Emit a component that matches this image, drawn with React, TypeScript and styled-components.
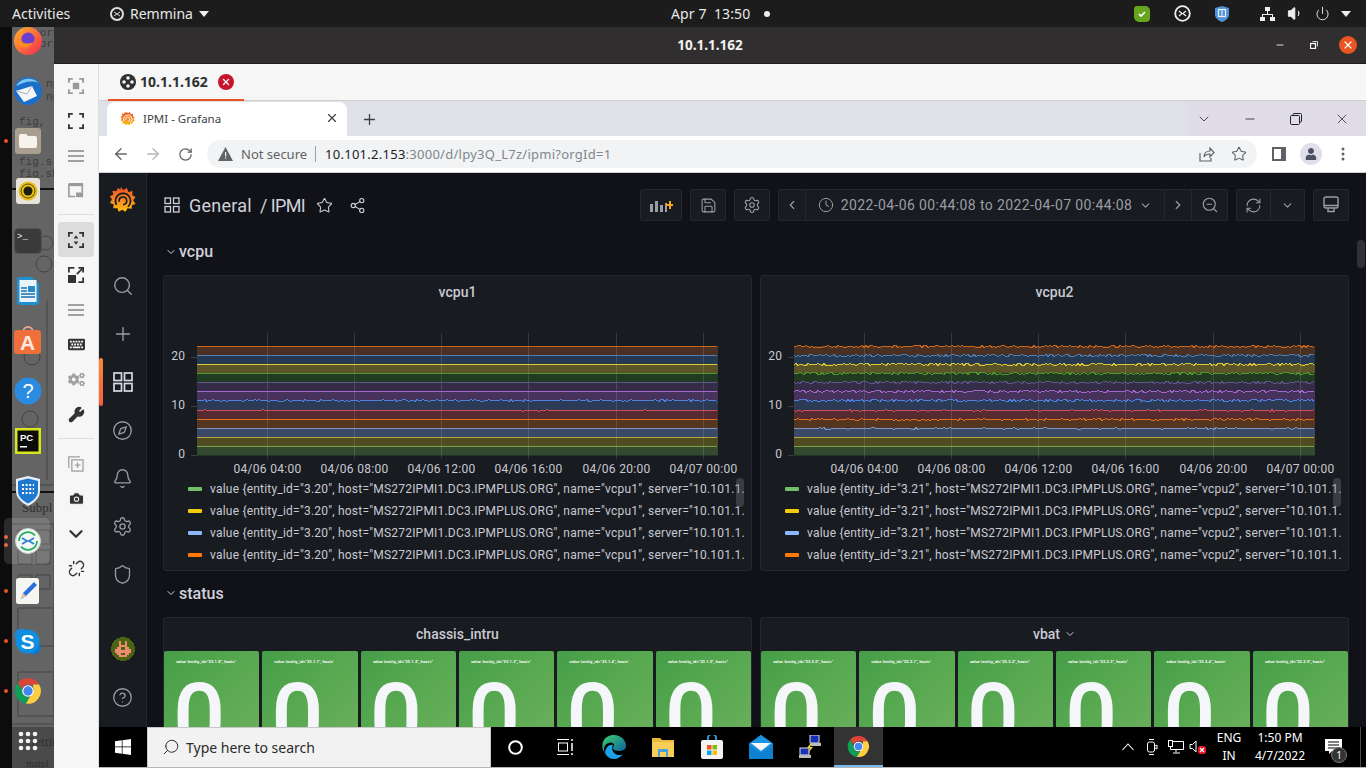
import React from 'react';
import styled, { createGlobalStyle } from 'styled-components';
import { Search, Plus, Compass, Bell, Settings, Shield, CircleHelp, Star, Share2, Save, Clock, ChevronDown, ChevronLeft, ChevronRight, ZoomOut, RefreshCw, X, ArrowLeft, ArrowRight, RotateCw, Minus, Wrench, Camera, Unlink, Volume1, Power } from 'lucide-react';
import { FaCogs, FaKeyboard, FaUser } from 'react-icons/fa';

const GlobalStyle = createGlobalStyle`
  html, body { margin: 0; padding: 0; width: 1366px; height: 768px; overflow: hidden; background: #000; }
  * { box-sizing: border-box; }
`;

const Screen = styled.div`
  width: 1366px; height: 768px; display: flex; flex-direction: column; overflow: hidden;
  font-family: "Noto Sans", sans-serif;
`;
const TopBar = styled.header`
  height: 27px; flex: none; background: #1c1c1c; color: #e8e8e8; display: flex; align-items: center; font-size: 14px; position: relative;
`;
const Activities = styled.span` margin-left: 12px; width: 98px; `;
const AppMenu = styled.span` display: flex; align-items: center; gap: 6px; width: 100px; svg { flex: none; } `;
const Clocks = styled.span` position: absolute; left: 671px; top: 4px; display: flex; align-items: center; gap: 14px; letter-spacing: .1px; `;
const ClockDot = styled.i` width: 6px; height: 6px; border-radius: 50%; background: #eee; `;
const TrayTop = styled.div` margin-left: auto; display: flex; align-items: center; height: 27px; padding-right: 9.5px; `;
const TraySlot = styled.span<{ $w: number }>` width: ${p => p.$w}px; display: flex; justify-content: center; align-items: center; color: #e8e8e8; `;
const Main = styled.div` flex: 1; min-height: 0; display: flex; `;

const Dock = styled.aside`
  width: 54px; flex: none; position: relative; overflow: hidden;
  background: linear-gradient(90deg, #0c0c0c 0 12px, #646464 12px 100%);
`;
const DockBackdrop = styled.svg` position: absolute; left: 0; top: 0; `;
const DockList = styled.div` position: relative; margin-top: -11px; display: flex; flex-direction: column; `;
const DockSlot = styled.div<{ $active?: boolean }>`
  height: 50px; display: flex; justify-content: center; align-items: center; padding-left: 1px; position: relative;
  &::after {
    content: ''; display: ${p => (p.$active ? 'block' : 'none')}; position: absolute; left: 4px; top: 2px; width: 46px; height: 46px;
    border-radius: 5px; background: rgba(255,255,255,.13);
  }
  svg { position: relative; z-index: 1; }
`;
const RunDot = styled.i<{ $top?: number }>`
  position: absolute; left: 4px; top: ${p => p.$top ?? 23}px; width: 4px; height: 4px; border-radius: 50%; background: #e95420;
`;

const Window = styled.section` flex: 1; min-width: 0; display: flex; flex-direction: column; `;
const TitleBar = styled.div`
  height: 37px; flex: none; background: #302e2e; color: #f2f2f2; font-size: 13.500px; font-weight: 700; position: relative;
  display: flex; align-items: center; justify-content: center; border-bottom: 1px solid #1e1e1e;
`;
const TitleButtons = styled.div` position: absolute; right: 9px; top: 9px; display: flex; align-items: center; gap: 16px; `;
const TitleBtn = styled.span<{ $close?: boolean }>`
  width: 18px; height: 18px; display: flex; align-items: center; justify-content: center; border-radius: 50%; color: #fff;
  background: ${p => (p.$close ? '#e95420' : 'transparent')};
`;
const WinBody = styled.div` flex: 1; min-height: 0; display: flex; `;
const RemTools = styled.nav`
  width: 45px; flex: none; background: #f6f6f6; display: flex; flex-direction: column; align-items: center; padding-top: 4px; border-right: 1px solid #dedede;
`;
const RemTool = styled.div<{ $active?: boolean; $tone?: string }>`
  width: 36px; height: 35px; display: flex; align-items: center; justify-content: center; border-radius: 4px; color: ${p => p.$tone ?? '#3b3b3b'};
  background: ${p => (p.$active ? '#dcdcdc' : 'transparent')};
`;
const RemDivider = styled.hr` width: 36px; border: 0; border-top: 1px solid #dcdcdc; margin: 6px 0 7px; `;
const RemContent = styled.div` flex: 1; min-width: 0; display: flex; flex-direction: column; `;
const RemTabs = styled.div` height: 37px; flex: none; background: #f6f6f6; border-bottom: 1px solid #cfcfcf; padding-left: 9px; `;
const RemTab = styled.div`
  width: 136px; height: 37px; border-bottom: 2px solid #e95420; display: flex; align-items: center; gap: 4px; padding: 0 0 0 12px;
  color: #303030; font-size: 14px; font-weight: 700;
`;
const RemClose = styled.span` width: 16px; height: 16px; margin-left: 6px; border-radius: 50%; background: #c7162b; color: #fff; display: flex; align-items: center; justify-content: center; `;

const TabStrip = styled.div`
  height: 35px; flex: none; background: #dee1e6; display: flex; align-items: flex-end; padding-left: 8px; color: #3c4043;
`;
const ChromeTab = styled.div`
  width: 240px; height: 34px; background: #fff; border-radius: 8px 8px 0 0; display: flex; align-items: center; padding: 0 8px 2px 13px; gap: 8px; font-size: 11.500px; color: #3c4043;
`;
const TabLabel = styled.span` flex: 1; `;
const NewTab = styled.span` width: 44px; height: 34px; display: flex; align-items: center; justify-content: center; `;
const WinControls = styled.div` margin-left: auto; width: 179px; height: 35px; background: #e0dce8; display: flex; align-items: center; justify-content: flex-end; padding-right: 1px; color: #202124; `;
const WinCtl = styled.span` width: 46px; flex: none; display: flex; justify-content: center; align-items: center; `;
const ChromeBar = styled.div`
  height: 37px; flex: none; background: #fff; border-bottom: 1px solid #cfd1d4; display: flex; align-items: center; color: #5f6368; padding-left: 6px;
`;
const NavBtn = styled.span<{ $dim?: boolean }>` width: 32px; display: flex; justify-content: center; color: ${p => (p.$dim ? '#b4b7bb' : '#5f6368')}; `;
const Omnibox = styled.div`
  margin-left: 6px; width: 1050px; height: 28px; border-radius: 14px; background: #f1f3f4; display: flex; align-items: center; padding: 0 10px 0 11px; font-size: 13px; color: #5f6368;
`;
const NotSecure = styled.span` margin-left: 8px; padding-right: 8px; border-right: 1px solid #9aa0a6; line-height: 16px; `;
const Url = styled.span` margin-left: 9px; flex: 1; color: #80868b; letter-spacing: .26px; b { font-weight: 400; color: #202124; } `;
const OmniIcons = styled.span` display: flex; align-items: center; gap: 16px; `;
const ChromeRight = styled.div` display: flex; align-items: center; margin-left: 6px; color: #5f6368; `;
const ChromeIcon = styled.span` width: 32px; display: flex; justify-content: center; align-items: center; `;
const Avatar = styled.span` width: 22px; height: 22px; border-radius: 50%; background: #e1deea; color: #4a5068; display: flex; align-items: center; justify-content: center; overflow: hidden; `;

const Grafana = styled.div` flex: 1; min-height: 0; display: flex; background: #111217; overflow: hidden; font-family: Roboto, sans-serif; color: #ccccdc; position: relative; `;
const SideMenu = styled.div` width: 48px; flex: none; background: #181b1f; border-right: 1px solid #24272d; display: flex; flex-direction: column; align-items: center; position: relative; color: #9a9da6; `;
const SideItem = styled.div<{ $active?: boolean; $h?: number }>`
  width: 100%; height: ${p => p.$h ?? 48}px; display: flex; align-items: center; justify-content: center; position: relative;
  color: ${p => (p.$active ? '#d8d9e6' : 'inherit')};
  &::before {
    content: ''; display: ${p => (p.$active ? 'block' : 'none')}; position: absolute; left: 0; top: 0; width: 4px; height: 100%; border-radius: 2px;
    background: linear-gradient(180deg, #ff8833, #f55f3e);
  }
`;
const SideLogo = styled.div` height: 89px; width: 100%; display: flex; justify-content: center; padding-top: 13px; `;
const SideSpacer = styled.div` height: 27px; flex: none; `;
const Board = styled.main` flex: 1; min-width: 0; padding: 0 17px 0 16px; display: flex; flex-direction: column; position: relative; `;
const DashNav = styled.div` height: 64px; flex: none; display: flex; align-items: center; `;
const Crumb = styled.div` display: flex; align-items: center; font-size: 18px; color: #d0d1dc; margin-left: 1px; svg { flex: none; } `;
const CrumbText = styled.span` margin-left: 9px; letter-spacing: .25px; white-space: pre; `;
const CrumbLeaf = styled.span` margin-left: 8px; letter-spacing: -.6px; white-space: pre; `;
const CrumbIcon = styled.span` display: flex; color: #d0d1dc; margin-left: 11px; & + & { margin-left: 16px; } `;
const NavTools = styled.div` margin-left: auto; display: flex; align-items: center; gap: 8px; `;
const ToolGroup = styled.div` display: flex; height: 32px; background: #181b1f; border: 1px solid #24272d; border-radius: 2px; color: #9a9da6; font-size: 14px; align-items: stretch; `;
const ToolCell = styled.span<{ $w: number; $split?: boolean }>`
  width: ${p => p.$w}px; display: flex; align-items: center; justify-content: center; gap: 7px; white-space: nowrap; letter-spacing: .38px;
  border-right: ${p => (p.$split ? '1px solid #24272d' : '0')};
`;
const Scrollbar = styled.div` position: absolute; right: 1px; top: 67px; width: 8px; height: 28px; border-radius: 4px; background: #2e3138; `;

const RowTitle = styled.div<{ $h: number; $pb?: number }>` height: ${p => p.$h}px; flex: none; display: flex; align-items: center; gap: 2px; padding: 0 0 ${p => p.$pb ?? 0}px 2px; font-size: 16px; font-weight: 500; color: #d0d1dc; `;
const PanelGrid = styled.div` display: grid; grid-template-columns: 589px 589px; gap: 8px; flex: none; `;
const Panel = styled.article<{ $h: number }>` height: ${p => p.$h}px; background: #181b1f; border: 1px solid #24272d; border-radius: 3px; overflow: hidden; display: flex; flex-direction: column; `;
const PanelTitle = styled.div` height: 33px; flex: none; display: flex; align-items: center; justify-content: center; gap: 4px; padding-bottom: 1px; font-size: 14px; font-weight: 500; color: #c8c9d4; `;
const Chart = styled.svg` display: block; flex: none; font-family: Roboto, sans-serif; `;
const Legend = styled.div` position: relative; height: 93px; padding: 1px 6px 0 24px; overflow: hidden; `;
const LegendRow = styled.div` height: 22px; display: flex; align-items: center; gap: 8px; font-size: 12px; color: #c8c9d4; white-space: nowrap; overflow: hidden; letter-spacing: .21px; `;
const Swatch = styled.i<{ $c: string }>` flex: none; width: 14px; height: 4px; border-radius: 1px; background: ${p => p.$c}; `;
const LegendThumb = styled.i` position: absolute; right: 7px; top: 1px; width: 8px; height: 29px; background: rgba(120,122,130,.35); border-radius: 4px; `;
const Tiles = styled.div` display: grid; grid-template-columns: repeat(6, 1fr); gap: 3px; `;
const Tile = styled.div`
  height: 200px; border-radius: 2px; background: linear-gradient(135deg, #469e48 0%, #5aaa52 35%, #6bae5c 60%); color: #f5f6fa; overflow: hidden; padding: 9px 0 0 12px;
`;
const TileLabel = styled.div` font-size: 4px; line-height: 4px; height: 4px; font-weight: 700; color: #fff; white-space: nowrap; overflow: hidden; width: 60px; letter-spacing: .1px; `;
const TileValue = styled.div` font-size: 92px; line-height: 86px; font-weight: 500; margin: 11px 0 0 -3px; `;

const Taskbar = styled.footer` height: 41px; flex: none; background: #000; display: flex; align-items: stretch; color: #fff; border-bottom: 1px solid #b5b5b5; `;
const StartBtn = styled.div` width: 48px; display: flex; align-items: center; justify-content: center; `;
const SearchBox = styled.div`
  width: 344px; background: #f2f2f2; border: 1px solid #c8c8c8; border-bottom: 0; color: #2b2b2b; font-size: 14px; display: flex; align-items: center; gap: 6px; padding: 0 0 1px 14px;
`;
const TaskItem = styled.div<{ $active?: boolean }>`
  width: 49px; display: flex; align-items: center; justify-content: center;
  background: ${p => (p.$active ? '#333' : 'transparent')}; border-bottom: ${p => (p.$active ? '2px solid #76b9ed' : '0')};
`;
const TrayArea = styled.div` margin-left: auto; display: flex; align-items: center; font-size: 12px; `;
const TrayIcon = styled.span<{ $w: number }>` width: ${p => p.$w}px; display: flex; align-items: center; justify-content: center; `;
const TrayText = styled.span<{ $w: number }>` width: ${p => p.$w}px; text-align: center; line-height: 18px; font-family: "Noto Sans", sans-serif; `;
const Notif = styled.span` width: 40px; margin-left: 2px; align-self: stretch; position: relative; display: flex; align-items: center; justify-content: center; `;
const NotifBadge = styled.i`
  position: absolute; right: 6px; bottom: 4px; width: 16px; height: 16px; border-radius: 50%; background: #333; border: 1px solid #777; color: #fff; font-style: normal; font-size: 10px; display: flex; align-items: center; justify-content: center;
`;
const ShowDesktop = styled.i` width: 1px; height: 100%; margin: 0 5px 0 7px; background: #4a4a4a; `;

/* ---------- drawings ---------- */
function ChromeLogo({ s = 24 }: { s?: number }) {
  return (
    <svg width={s} height={s} viewBox="0 0 48 48">
      <path fill="#db4437" d="M24 2a22 22 0 0 1 19 11H24a11 11 0 0 0-10.500 7.600L6.600 9.700A22 22 0 0 1 24 2z" />
      <path fill="#0f9d58" d="M6.600 9.700l8.900 15.400A9.500 9.500 0 0 0 27 34.600L20.500 45.700A22 22 0 0 1 6.600 9.700z" />
      <path fill="#ffcd40" d="M43 13a22 22 0 0 1-22.500 32.700l9-15.600A11 11 0 0 0 33 18l-.5-5z" />
      <circle cx="24" cy="24" r="10" fill="#fff" />
      <circle cx="24" cy="24" r="8" fill="#4285f4" />
    </svg>
  );
}
function GrafanaLogo({ s = 26, bg = '#181b1f', id = 'gf' }: { s?: number; bg?: string; id?: string }) {
  return (
    <svg width={s} height={s} viewBox="0 0 32 32">
      <defs>
        <linearGradient id={id} x1="0" y1="0" x2="0" y2="1">
          <stop offset="0" stopColor="#f0522a" />
          <stop offset=".55" stopColor="#f7881f" />
          <stop offset="1" stopColor="#fbc20f" />
        </linearGradient>
      </defs>
      <path fill={`url(#${id})`} d="M14 1l3 4 4-3 2 5 5-1-.5 5 4 2-3 4 3 4-4.500 2 0 4-5-.5-2.500 4-4-2.500-4 2.500-1.500-4-5 0 .5-5L1 20l2.500-4L1 12l4-1.500-1-5 5 .5 1.500-4 3 2.500z" />
      <path fill="none" stroke={bg} strokeWidth="2" strokeLinecap="round" d="M8.500 21.500A9 9 0 1 1 23 24" />
      <path fill="none" stroke={bg} strokeWidth="1.900" strokeLinecap="round" d="M12 18a4.500 4.500 0 1 1 5.500 4" />
    </svg>
  );
}
function Corners({ s = 20, w = 2 }: { s?: number; w?: number }) {
  return <path fill="none" stroke="currentColor" strokeWidth={w} d={`M1 6V1h5M${s - 6} 1h5v5M${s - 1} ${s - 6}v5h-5M6 ${s - 1}H1v-5`} />;
}
const Lines = () => (
  <svg width="16" height="14" viewBox="0 0 16 14"><path stroke="currentColor" strokeWidth="2.200" d="M0 2h16M0 7h16M0 12h16" /></svg>
);

function SmallIcon({ kind }: { kind: string }) {
  switch (kind) {
    case 'view': return <svg width="16" height="16" viewBox="0 0 20 20"><Corners w={2.600} /><rect x="6" y="6" width="8" height="8" fill="currentColor" /></svg>;
    case 'full': return <svg width="16" height="16" viewBox="0 0 20 20"><Corners w={2.600} /></svg>;
    case 'pip': return <svg width="16" height="15" viewBox="0 0 20 19"><path fill="none" stroke="currentColor" strokeWidth="2" d="M1 1h17v11M1 1v16h8" /><rect x="1" y="1" width="17" height="3" fill="currentColor" /><rect x="10" y="12" width="9" height="6" fill="currentColor" /></svg>;
    case 'fit': return <svg width="16" height="16" viewBox="0 0 20 20"><Corners w={2.600} /><path fill="currentColor" d="M10 4l3 4H7zM10 16l-3-4h6z" /></svg>;
    case 'scale': return <svg width="16" height="16" viewBox="0 0 20 20"><rect x="0" y="10" width="10" height="10" fill="currentColor" /><path fill="none" stroke="currentColor" strokeWidth="2.400" d="M1 7V1h7M13 1h6v6M19 13v6h-6" /><path stroke="currentColor" strokeWidth="2.200" d="M11 9l7-7" /></svg>;
    case 'dup': return <svg width="16" height="16" viewBox="0 0 20 20"><path fill="none" stroke="currentColor" strokeWidth="1.600" d="M15 1H1v14" /><rect x="4.800" y="4.800" width="14" height="14" fill="none" stroke="currentColor" strokeWidth="1.600" /><path stroke="currentColor" strokeWidth="1.600" d="M12 8v7M8.500 11.500h7" /></svg>;
    default: return null;
  }
}

const SERIES = {
  strokes: ['#c9661a', '#4f7fb0', '#dcc836', '#4f9a2f', '#5f5690', '#a468cc', '#4f82e0', '#d24a60', '#e0701f', '#7f96c4', '#b8a63a', '#7da34a'],
  bands: ['#4a3022', '#253a52', '#5a5428', '#213a22', '#352d48', '#46325a', '#2b3b55', '#552b30', '#54351f', '#3a4966', '#504c22', '#344a30'],
  ys: [346, 355, 364, 373, 382, 391, 400, 410, 419, 428, 437, 446],
};
const TICK_X = ['04/06 04:00', '04/06 08:00', '04/06 12:00', '04/06 16:00', '04/06 20:00', '04/07 00:00'];
const rng = (seed: number) => () => {
  seed = (seed * 1664525 + 1013904223) >>> 0;
  return seed / 4294967296;
};
function seriesPath(x0: number, x1: number, y: number, amp: number, seed: number) {
  const r = rng(seed);
  let d = `M${x0} ${y + 0.5}`;
  for (let x = x0 + 2; x <= x1; x += 2) {
    r();
    const v = amp === 0 ? 0 : Math.round((r() - 0.5) * 2 * amp);
    d += `L${x} ${y + v + 0.5}`;
  }
  return d;
}
function GraphChart({ dx, amps }: { dx: number; amps: number[] }) {
  const x0 = 197 + dx;
  const x1 = 718 + dx;
  return (
    <Chart width={587} height={168} viewBox={`${164 + dx} 309 587 168`}>
      {SERIES.ys.map((y, i) => (
        <rect key={i} x={x0} y={y} width={x1 - x0} height={(SERIES.ys[i + 1] ?? 455.500) - y} fill={SERIES.bands[i]} />
      ))}
      {TICK_X.map((t, i) => {
        const gx = Math.round(266.700 + dx + i * 87.200) + 0.5;
        return (
          <g key={t}>
            <line x1={gx} x2={gx} y1={333} y2={459} stroke="#fff" strokeOpacity=".13" />
            <text x={gx} y={473} textAnchor="middle" fontSize="12" letterSpacing=".3" fill="#c8c9d4">{t}</text>
          </g>
        );
      })}
      {SERIES.ys.map((y, i) => (
        <path key={i} d={seriesPath(x0, x1, y, amps[i], 11 + i * 37 + dx)} fill="none" stroke={SERIES.strokes[i]} strokeWidth="1" shapeRendering="crispEdges" />
      ))}
      {([['20', 357], ['10', 406], ['0', 455]] as [string, number][]).map(([l, y]) => (
        <g key={l}>
          <line x1={191 + dx} x2={197 + dx} y1={y + 0.5} y2={y + 0.5} stroke="#3a3d44" />
          <text x={185.500 + dx} y={y + 3} textAnchor="end" fontSize="12" letterSpacing=".4" fill="#c8c9d4">{l}</text>
        </g>
      ))}
    </Chart>
  );
}

function DockIcon({ kind }: { kind: string }) {
  switch (kind) {
    case 'firefox': return <svg width="30" height="30" viewBox="0 0 30 30"><defs><linearGradient id="ff" x1="0" y1="0" x2="1" y2="1"><stop offset="0" stopColor="#ffb72a" /><stop offset="1" stopColor="#f2264f" /></linearGradient></defs><circle cx="15" cy="15" r="14" fill="url(#ff)" /><circle cx="15" cy="13" r="6.500" fill="#6a3fd0" /><path d="M4 10c3 8 11 9 16 6-2 5-10 8-15 3z" fill="#ff8a1f" /></svg>;
    case 'mail': return <svg width="30" height="30" viewBox="0 0 30 30"><circle cx="15" cy="15" r="14" fill="#1b6fc9" /><path d="M3 10c4-8 16-10 23-3-8-3-15-1-23 3z" fill="#7cc6f5" /><path d="M3 15l16-5 5 10-13 6z" fill="#f3f5f7" /><path d="M3 15l11 3 5-8" fill="none" stroke="#a8b4c0" /></svg>;
    case 'files': return <svg width="26" height="26" viewBox="0 0 26 26"><rect width="26" height="26" rx="3" fill="#a89f8f" /><path d="M4 8a2 2 0 0 1 2-2h5l2 2h7a2 2 0 0 1 2 2v8a2 2 0 0 1-2 2H6a2 2 0 0 1-2-2z" fill="#f6f3ec" /></svg>;
    case 'rhythm': return <svg width="24" height="26" viewBox="0 0 24 26"><rect width="24" height="26" rx="3" fill="#e7e3da" /><circle cx="12" cy="13" r="9.500" fill="#e8c21b" /><circle cx="12" cy="13" r="7" fill="#e8c21b" stroke="#5b4a06" /><circle cx="12" cy="13" r="4.500" fill="#1b1b10" /></svg>;
    case 'term': return <svg width="28" height="26" viewBox="0 0 28 26" fontFamily="Liberation Mono, monospace"><rect x=".5" y=".5" width="27" height="25" rx="4" fill="#3a3a3a" stroke="#555" /><text x="3" y="11" fontSize="9" fill="#eee">&gt;_</text></svg>;
    case 'writer': return <svg width="24" height="28" viewBox="0 0 24 28"><path d="M1 3a3 3 0 0 1 3-3h12l7 7v18a3 3 0 0 1-3 3H4a3 3 0 0 1-3-3z" fill="#1f8fd0" /><rect x="3.500" y="3" width="17" height="22" fill="#e8f3fa" /><path stroke="#1672ad" strokeWidth="1.400" d="M5 11h6M5 14h6M5 17h14M5 20h14" /><rect x="12" y="9" width="7" height="6" fill="#2b8ac4" /></svg>;
    case 'store': return <svg width="28" height="30" viewBox="0 0 28 30"><path d="M9 6a5 5 0 0 1 10 0" fill="none" stroke="#e8a58c" strokeWidth="1.800" /><rect y="4" width="27" height="24" rx="3" fill="#ee6f3a" /><text x="13.500" y="24" textAnchor="middle" fontSize="21" fontWeight="700" fontFamily="Liberation Sans, sans-serif" fill="#fbe9df">A</text></svg>;
    case 'help': return <svg width="28" height="28" viewBox="0 0 28 28"><circle cx="14" cy="14" r="13.500" fill="#2a8be0" /><text x="14" y="21" textAnchor="middle" fontSize="20" fontFamily="Liberation Sans, sans-serif" fill="#fff">?</text></svg>;
    case 'pycharm': return <svg width="26" height="26" viewBox="0 0 26 26" fontFamily="Liberation Sans, sans-serif"><rect width="26" height="26" fill="#d8e61c" /><rect x="2.500" y="2.500" width="21" height="21" fill="#0b0b0b" /><text x="5" y="13" fontSize="9.500" fontWeight="700" fill="#fff">PC</text><rect x="5" y="18" width="7" height="1.500" fill="#fff" /></svg>;
    case 'shield': return <svg width="26" height="30" viewBox="0 0 26 30"><path d="M13 0l12 3v12c0 7-6 12-12 15C7 27 1 22 1 15V3z" fill="#e6eef7" /><path d="M13 2.500l10 2.500v10c0 6-5 10-10 12.500C8 25 3 21 3 15V5z" fill="#1e78cf" /><path stroke="#fff" strokeWidth="2" strokeDasharray="2 1.600" d="M7 9h12M7 13h12M7 17h12" /></svg>;
    case 'remmina': return <svg width="26" height="26" viewBox="0 0 26 26"><circle cx="13" cy="13" r="12.500" fill="#f4f6f5" stroke="#c9d0cd" /><path d="M4 13a9 9 0 0 1 16-5.500M22 13a9 9 0 0 1-16 5.500" fill="none" stroke="#27ae60" strokeWidth="1.800" /><path d="M7 10l5 3-5 3M19 10l-5 3 5 3" fill="none" stroke="#2a82d0" strokeWidth="1.800" /></svg>;
    case 'editor': return <svg width="23" height="26" viewBox="0 0 23 26"><rect width="23" height="26" rx="2.500" fill="#f5f5f1" /><path d="M5 21l2-6L18 4l3 3L10 18z" fill="#2a6fdd" /><path d="M5 21l2-6 3 3z" fill="#e9c593" /></svg>;
    case 'skype': return <svg width="27" height="27" viewBox="0 0 27 27"><circle cx="7" cy="7" r="6.500" fill="#1e88dd" /><circle cx="20" cy="20" r="6.500" fill="#0f78cf" /><circle cx="13.500" cy="13.500" r="12" fill="#0d8ee0" /><text x="13.500" y="21" textAnchor="middle" fontSize="21" fontWeight="700" fontFamily="Liberation Sans, sans-serif" fill="#fff">S</text></svg>;
    case 'chrome': return <ChromeLogo s={28} />;
    case 'apps': return <svg width="20" height="20" viewBox="0 0 20 20" fill="#f2f2f2">{[3, 10, 17].flatMap(y => [3, 10, 17].map(x => <circle key={`${x}${y}`} cx={x} cy={y} r="2.300" />))}</svg>;
    default: return null;
  }
}

const DOCK = ['firefox', 'mail', 'files', 'rhythm', 'term', 'writer', 'store', 'help', 'pycharm', 'shield', 'remmina', 'editor', 'skype', 'chrome', 'apps'];
const legendColors = ['#73bf69', '#f2cc0c', '#8ab8ff', '#ff780a'];

function GraphPanel({ title, id, dx, amps }: { title: string; id: string; dx: number; amps: number[] }) {
  return (
    <Panel $h={296}>
      <PanelTitle>{title}</PanelTitle>
      <GraphChart dx={dx} amps={amps} />
      <Legend>
        {legendColors.map(c => (
          <LegendRow key={c}>
            <Swatch $c={c} />
            {`value {entity_id="${id}", host="MS272IPMI1.DC3.IPMPLUS.ORG", name="${title}", server="10.101.1.162:9290"}`}
          </LegendRow>
        ))}
        <LegendThumb />
      </Legend>
    </Panel>
  );
}
function StatusPanel({ title, caret, id }: { title: string; caret?: boolean; id: string }) {
  return (
    <Panel $h={300}>
      <PanelTitle>{title}{caret && <ChevronDown size={12} />}</PanelTitle>
      <Tiles>
        {[0, 1, 2, 3, 4, 5].map(i => (
          <Tile key={i}>
            <TileLabel>{`value {entity_id="${id}.${i}", host="MS272IPMI1", name="${title}"}`}</TileLabel>
            <TileValue>0</TileValue>
          </Tile>
        ))}
      </Tiles>
    </Panel>
  );
}

export default function App() {
  const flat = [0, 0, 0, 0, 0, 0, .7, .51, 0, 0, 0, 0];
  const noisy = [1.100, 1.100, 1.100, 1.100, 1.100, 1.100, 1.100, .6, .7, .6, 0, 0];
  return (
    <>
      <GlobalStyle />
      <Screen>
        <TopBar>
          <Activities>Activities</Activities>
          <AppMenu>
            <svg width="14" height="14" viewBox="0 0 14 14"><circle cx="7" cy="7" r="6" fill="none" stroke="#ddd" strokeWidth="2" /><path d="M4 5l3 2-3 2M10 5L7 7l3 2" fill="none" stroke="#ddd" /></svg>
            <span>Remmina</span>
            <svg width="10" height="6" viewBox="0 0 10 6"><path d="M0 0h10L5 6z" fill="#eee" /></svg>
          </AppMenu>
          <Clocks>Apr 7&nbsp; 13:50<ClockDot /></Clocks>
          <TrayTop>
            <TraySlot $w={61}>
              <svg width="16" height="16" viewBox="0 0 16 16"><path d="M3 0h8c3 0 5 2 5 5v7c0 3-2 4-5 4H6c-3 0-6-2-6-5V3c0-2 1-3 3-3z" fill="#66a61e" /><path d="M5 8l2 2 4-4" fill="none" stroke="#fff" strokeWidth="1.600" /></svg>
            </TraySlot>
            <TraySlot $w={19}>
              <svg width="17" height="17" viewBox="0 0 17 17"><circle cx="8.500" cy="8.500" r="7.300" fill="none" stroke="#eee" strokeWidth="1.800" /><path d="M5 6l3 2.500-3 2.500M12 6L9 8.500l3 2.500" fill="none" stroke="#eee" strokeWidth="1.200" /></svg>
            </TraySlot>
            <TraySlot $w={61}>
              <svg width="14" height="16" viewBox="0 0 14 16"><path d="M7 0l7 2v7c0 3-4 6-7 7-3-1-7-4-7-7V2z" fill="#4f93d8" /><rect x="3.500" y="3.500" width="7" height="7" fill="none" stroke="#e8f2fb" strokeWidth="1.200" /><path d="M7 4v6" stroke="#e8f2fb" /></svg>
            </TraySlot>
            <TraySlot $w={29}>
              <svg width="15" height="14" viewBox="0 0 15 14" fill="#eee"><rect x="5" y="0" width="5" height="4" /><rect x="0" y="10" width="5" height="4" /><rect x="10" y="10" width="5" height="4" /><path d="M7 4h1v3h5v3h-1V8H3v2H2V7h5z" /></svg>
            </TraySlot>
            <TraySlot $w={27}><Volume1 size={17} fill="#eee" strokeWidth={1.500} /></TraySlot>
            <TraySlot $w={27}><Power size={15} strokeWidth={1.500} /></TraySlot>
            <TraySlot $w={21}><svg width="10" height="6" viewBox="0 0 10 6"><path d="M0 0h10L5 6z" fill="#eee" /></svg></TraySlot>
          </TrayTop>
        </TopBar>
        <Main>
          <Dock>
            <DockBackdrop width="54" height="741" viewBox="0 27 54 741" fontFamily="Liberation Mono, monospace" fontSize="11" fill="#3c3c3c">
              <text x="20" y="36">impor</text><text x="20" y="47">impor</text>
              <text x="46" y="87">np</text><text x="46" y="100">np</text>
              <text x="19" y="125">fig,</text><text x="19" y="138">ple</text><text x="19" y="165">fig.s</text><text x="19" y="177">fig.sh</text>
              <path d="M12 189h42" stroke="#111" strokeWidth="2" />
              <g fill="none" stroke="#444">
                <circle cx="46" cy="243" r="7" /><circle cx="44" cy="264" r="8" /><circle cx="30" cy="291" r="8" /><circle cx="32" cy="357" r="8" /><circle cx="30" cy="419" r="8" />
                <path d="M47 300v180M12 485h42" />
                <path d="M12 524h42v200H12M18 530h14v14H18zM36 530h14v14H36zM18 550h14v14H18zM36 550h14v14H36zM18 575h14v14H18zM36 575h14v14H36zM18 608h36v38H18zM18 672h36v44H18z" />
              </g>
              <path d="M12 727h42v41H12z" fill="#4a4a4a" />
              <path d="M12 492h42" stroke="#111" strokeWidth="2" />
              <text x="22" y="512" fontFamily="Liberation Serif, serif" fontSize="13" fill="#2e2e2e">Subpl</text>
              <text x="26" y="746" fontFamily="Liberation Serif, serif" fontSize="13" fill="#2e2e2e">Gettin</text>
              <text x="26" y="767" fontFamily="Liberation Serif, serif" fontSize="10" fill="#2e2e2e">matpl</text>
            </DockBackdrop>
            <DockList>
              {DOCK.map(k => (
                <DockSlot key={k} $active={k === 'remmina'}>
                  {k === 'files' && <RunDot />}
                  {k === 'remmina' && <RunDot $top={19} />}
                  {k === 'remmina' && <RunDot $top={27} />}
                  {(k === 'editor' || k === 'skype' || k === 'chrome') && <RunDot />}
                  <DockIcon kind={k} />
                </DockSlot>
              ))}
            </DockList>
          </Dock>
          <Window>
            <TitleBar>
              <span>10.1.1.162</span>
              <TitleButtons>
                <TitleBtn><Minus size={10} strokeWidth={2} /></TitleBtn>
                <TitleBtn><svg width="8" height="8" viewBox="0 0 8 8" fill="none" stroke="#fff"><rect x=".5" y="2.500" width="5" height="5" strokeWidth="1.300" /><path d="M2.500 .5h5v5" strokeWidth=".8" /></svg></TitleBtn>
                <TitleBtn $close><X size={12} strokeWidth={2.500} /></TitleBtn>
              </TitleButtons>
            </TitleBar>
            <WinBody>
              <RemTools>
                <RemTool $tone="#9a9a9a"><SmallIcon kind="view" /></RemTool>
                <RemTool $tone="#333"><SmallIcon kind="full" /></RemTool>
                <RemTool $tone="#a0a0a0"><Lines /></RemTool>
                <RemTool $tone="#9a9a9a"><SmallIcon kind="pip" /></RemTool>
                <RemDivider />
                <RemTool $active $tone="#333"><SmallIcon kind="fit" /></RemTool>
                <RemTool $tone="#333"><SmallIcon kind="scale" /></RemTool>
                <RemTool $tone="#a0a0a0"><Lines /></RemTool>
                <RemTool $tone="#333"><FaKeyboard size={17} /></RemTool>
                <RemTool $tone="#a0a0a0"><FaCogs size={17} /></RemTool>
                <RemTool $tone="#333"><Wrench size={17} fill="#333" /></RemTool>
                <RemDivider />
                <RemTool $tone="#a0a0a0"><SmallIcon kind="dup" /></RemTool>
                <RemTool $tone="#333"><Camera size={17} fill="#333" stroke="#f6f6f6" strokeWidth={1.500} /></RemTool>
                <RemTool $tone="#333"><ChevronDown size={22} strokeWidth={2.500} /></RemTool>
                <RemTool $tone="#333"><Unlink size={17} /></RemTool>
              </RemTools>
              <RemContent>
                <RemTabs>
                  <RemTab>
                    <svg width="16" height="16" viewBox="0 0 16 16"><circle cx="8" cy="8" r="8" fill="#2f2f2f" /><g fill="#f6f6f6"><circle cx="8" cy="4" r="1.800" /><circle cx="8" cy="12" r="1.800" /><circle cx="4" cy="8" r="1.800" /><circle cx="12" cy="8" r="1.800" /></g></svg>
                    <span>10.1.1.162</span>
                    <RemClose><X size={10} strokeWidth={3} /></RemClose>
                  </RemTab>
                </RemTabs>
                <TabStrip>
                  <ChromeTab>
                    <GrafanaLogo s={15} bg="#fff" id="gftab" />
                    <TabLabel>IPMI - Grafana</TabLabel>
                    <X size={14} />
                  </ChromeTab>
                  <NewTab><Plus size={17} strokeWidth={1.800} /></NewTab>
                  <WinControls>
                    <WinCtl><ChevronDown size={16} strokeWidth={1.200} /></WinCtl>
                    <WinCtl><Minus size={14} strokeWidth={1.400} /></WinCtl>
                    <WinCtl><svg width="12" height="12" viewBox="0 0 12 12" fill="none" stroke="#202124"><rect x=".5" y="2.500" width="9" height="9" rx="1" /><path d="M3 2.500V1.500a1 1 0 0 1 1-1h6.500a1 1 0 0 1 1 1V8a1 1 0 0 1-1 1h-1" /></svg></WinCtl>
                    <WinCtl><X size={16} strokeWidth={1.100} /></WinCtl>
                  </WinControls>
                </TabStrip>
                <ChromeBar>
                  <NavBtn><ArrowLeft size={18} strokeWidth={1.800} /></NavBtn>
                  <NavBtn $dim><ArrowRight size={18} strokeWidth={1.800} /></NavBtn>
                  <NavBtn><RotateCw size={15} strokeWidth={2} /></NavBtn>
                  <Omnibox>
                    <svg width="15" height="14" viewBox="0 0 15 14"><path d="M7.500 0L15 14H0z" fill="#5f6368" /><path d="M7 5h1.200v4.500H7zM7 10.500h1.200v1.300H7z" fill="#f1f3f4" /></svg>
                    <NotSecure>Not secure</NotSecure>
                    <Url><b>10.101.2.153</b>:3000/d/lpy3Q_L7z/ipmi?orgId=1</Url>
                    <OmniIcons>
                      <svg width="16" height="15" viewBox="0 0 16 15" fill="none" stroke="#5f6368" strokeWidth="1.200"><path d="M1 6v8h11v-3M5 10c0-4 3-6 6-6V1l4 4.500L11 10V7c-3 0-5 1-6 3z" /></svg>
                      <Star size={16} strokeWidth={1.600} />
                    </OmniIcons>
                  </Omnibox>
                  <ChromeRight>
                    <ChromeIcon><svg width="14" height="14" viewBox="0 0 14 14"><path fillRule="evenodd" d="M0 0h14v14H0zM2 2v10h7V2z" fill="#5f6368" /></svg></ChromeIcon>
                    <ChromeIcon><Avatar><FaUser size={12} /></Avatar></ChromeIcon>
                    <ChromeIcon><svg width="4" height="14" viewBox="0 0 4 14" fill="#5f6368"><circle cx="2" cy="2" r="1.500" /><circle cx="2" cy="7" r="1.500" /><circle cx="2" cy="12" r="1.500" /></svg></ChromeIcon>
                  </ChromeRight>
                </ChromeBar>
                <Grafana>
                  <SideMenu>
                    <SideLogo><GrafanaLogo s={27} /></SideLogo>
                    <SideItem $h={48}><Search size={22} strokeWidth={1.500} /></SideItem>
                    <SideItem><Plus size={22} strokeWidth={1.500} /></SideItem>
                    <SideItem $active>
                      <svg width="20" height="20" viewBox="0 0 20 20" fill="none" stroke="currentColor" strokeWidth="1.700"><rect x="1" y="1" width="7.500" height="7.500" /><rect x="11.500" y="1" width="7.500" height="7.500" /><rect x="1" y="11.500" width="7.500" height="7.500" /><rect x="11.500" y="11.500" width="7.500" height="7.500" /></svg>
                    </SideItem>
                    <SideItem><Compass size={21} strokeWidth={1.500} /></SideItem>
                    <SideItem><Bell size={21} strokeWidth={1.500} /></SideItem>
                    <SideItem><Settings size={21} strokeWidth={1.500} /></SideItem>
                    <SideItem><Shield size={21} strokeWidth={1.500} /></SideItem>
                    <SideSpacer />
                    <SideItem>
                      <svg width="24" height="24" viewBox="0 0 24 24" shapeRendering="crispEdges"><circle cx="12" cy="12" r="12" fill="#4a6414" /><path d="M8 4h2v4h4V4h2v6h2v2h2v4h-2v2h-2v2H8v-2H6v-2H4v-4h2v-2h2z" fill="#f08a70" /><path d="M10 10h4v3h-4zM10 16h4v2h-4z" fill="#4a6414" /></svg>
                    </SideItem>
                    <SideItem><CircleHelp size={21} strokeWidth={1.500} /></SideItem>
                  </SideMenu>
                  <Board>
                    <DashNav>
                      <Crumb>
                        <svg width="16" height="16" viewBox="0 0 16 16" fill="none" stroke="currentColor" strokeWidth="1.300"><rect x="1" y="1" width="5.500" height="5.500" /><rect x="9.500" y="1" width="5.500" height="5.500" /><rect x="1" y="9.500" width="5.500" height="5.500" /><rect x="9.500" y="9.500" width="5.500" height="5.500" /></svg>
                        <CrumbText>General</CrumbText>
                        <CrumbLeaf>/ IPMI</CrumbLeaf>
                        <CrumbIcon><Star size={17} strokeWidth={1.500} /></CrumbIcon>
                        <CrumbIcon><Share2 size={17} strokeWidth={1.500} /></CrumbIcon>
                      </Crumb>
                      <NavTools>
                        <ToolGroup>
                          <ToolCell $w={40}>
                            <svg width="23" height="14" viewBox="0 0 23 14"><path d="M0 6h3v8H0zM5 3h3v11H5zM10 7h3v7h-3zM15 5h2v9h-2z" fill="#9a9da6" /><path d="M19 3h2v3h2v2h-2v3h-2V8h-3V6h3z" fill="#f5a623" /></svg>
                          </ToolCell>
                        </ToolGroup>
                        <ToolGroup><ToolCell $w={34}><Save size={17} strokeWidth={1.500} /></ToolCell></ToolGroup>
                        <ToolGroup><ToolCell $w={34}><Settings size={18} strokeWidth={1.500} /></ToolCell></ToolGroup>
                        <ToolGroup>
                          <ToolCell $w={27} $split><ChevronLeft size={14} /></ToolCell>
                          <ToolCell $w={359} $split>
                            <Clock size={16} strokeWidth={1.500} />
                            2022-04-06 00:44:08 to 2022-04-07 00:44:08
                            <ChevronDown size={13} />
                          </ToolCell>
                          <ToolCell $w={27} $split><ChevronRight size={14} /></ToolCell>
                          <ToolCell $w={35}><ZoomOut size={18} strokeWidth={1.500} /></ToolCell>
                        </ToolGroup>
                        <ToolGroup>
                          <ToolCell $w={34} $split><RefreshCw size={17} strokeWidth={1.500} /></ToolCell>
                          <ToolCell $w={33}><ChevronDown size={13} /></ToolCell>
                        </ToolGroup>
                        <ToolGroup>
                          <ToolCell $w={34}>
                            <svg width="16" height="18" viewBox="0 0 16 18" fill="none" stroke="currentColor" strokeWidth="1.400"><rect x="1" y="1" width="14" height="11" rx="2" /><path d="M1 9.500h14M5 12.500v3h6v-3" /></svg>
                          </ToolCell>
                        </ToolGroup>
                      </NavTools>
                    </DashNav>
                    <Scrollbar />
                    <RowTitle $h={38} $pb={9}><ChevronDown size={12} />vcpu</RowTitle>
                    <PanelGrid>
                      <GraphPanel title="vcpu1" id="3.20" dx={0} amps={flat} />
                      <GraphPanel title="vcpu2" id="3.21" dx={597} amps={noisy} />
                    </PanelGrid>
                    <RowTitle $h={46} $pb={2}><ChevronDown size={12} />status</RowTitle>
                    <PanelGrid>
                      <StatusPanel title="chassis_intru" id="23.1" />
                      <StatusPanel title="vbat" caret id="23.2" />
                    </PanelGrid>
                  </Board>
                </Grafana>
                <Taskbar>
                  <StartBtn>
                    <svg width="16" height="16" viewBox="0 0 16 16" fill="#fff"><path d="M0 2.300l6.800-1v6.300H0zM7.500 1.200L16 0v7.600H7.500zM0 8.300h6.800v6.400l-6.800-1zM7.500 8.300H16V16l-8.500-1.200z" /></svg>
                  </StartBtn>
                  <SearchBox><Search size={18} strokeWidth={1.300} transform="scale(-1,1)" /><span>Type here to search</span></SearchBox>
                  <TaskItem><svg width="15" height="15" viewBox="0 0 15 15"><circle cx="7.500" cy="7.500" r="6.300" fill="none" stroke="#fff" strokeWidth="2" /></svg></TaskItem>
                  <TaskItem><svg width="18" height="18" viewBox="0 0 18 18" fill="none" stroke="#fff"><path d="M1 1.500h12M1 16.500h12" /><rect x="2.500" y="5" width="9" height="8" /><path d="M16 1v2M16 5v8M16 15v2" strokeWidth="1.500" /></svg></TaskItem>
                  <TaskItem><svg width="24" height="24" viewBox="0 0 24 24"><defs><linearGradient id="edge" x1="0" y1="0" x2="1" y2="1"><stop offset="0" stopColor="#3bd46b" /><stop offset="1" stopColor="#0c59a4" /></linearGradient></defs><path d="M12 0c7 0 12 5 12 11 0 4-4 5-7 5-4 0-6-1-6-3 0-1 1-2 1-3 0-2-3-3-5-2C2 9 1 14 3 18c-3-3-3-8-2-11C3 2 7 0 12 0z" fill="url(#edge)" /><path d="M3 18c1-6 4-9 8-8-2 4 0 9 5 10 2 0 4 0 5-1-2 3-6 5-9 5-4 0-7-2-9-6z" fill="#1aa1e8" /></svg></TaskItem>
                  <TaskItem><svg width="22" height="20" viewBox="0 0 22 20"><path d="M0 1h8l2 2h12v4H0z" fill="#e8b93b" /><path d="M0 5h22v15H0z" fill="#f7cf58" /><rect x="6" y="12" width="10" height="8" fill="#4aa1dc" /><rect x="8" y="15" width="6" height="5" fill="#f7cf58" /></svg></TaskItem>
                  <TaskItem><svg width="22" height="24" viewBox="0 0 22 24"><path d="M7 6V3a4 4 0 0 1 8 0v3" fill="none" stroke="#39a0e0" strokeWidth="1.800" /><rect y="5" width="22" height="19" rx="2" fill="#f3f3f3" /><path d="M6 10h4.500v4.500H6z" fill="#f35325" /><path d="M11.500 10H16v4.500h-4.500z" fill="#81bc06" /><path d="M6 15.500h4.500V20H6z" fill="#05a6f0" /><path d="M11.500 15.500H16V20h-4.500z" fill="#ffba08" /></svg></TaskItem>
                  <TaskItem><svg width="24" height="24" viewBox="0 0 24 24"><path d="M12 0l12 9v15H0V9z" fill="#0f7fd0" /><path d="M0 9l12 9 12-9v-.5L12 0 0 8.500z" fill="#1b94e4" /><path d="M2 8h20l-10 8z" fill="#f4f8fb" /></svg></TaskItem>
                  <TaskItem><svg width="22" height="24" viewBox="0 0 22 24"><rect x="11" y="0" width="9" height="8" fill="#1730b8" stroke="#ddd" /><rect x="12" y="8" width="10" height="3" fill="#bbb" /><rect x="1" y="13" width="9" height="7" fill="#1730b8" stroke="#ddd" /><rect x="0" y="20" width="12" height="3" fill="#bbb" /><path d="M12 8l-4 5h3l-2 5 5-6h-3l2-4z" fill="#f4d92c" /></svg></TaskItem>
                  <TaskItem $active><ChromeLogo s={23} /></TaskItem>
                  <TrayArea>
                    <TrayIcon $w={22}><svg width="12" height="8" viewBox="0 0 12 8" fill="none" stroke="#fff" strokeWidth="1.100"><path d="M.5 7L6 1l5.500 6" /></svg></TrayIcon>
                    <TrayIcon $w={26}><svg width="12" height="18" viewBox="0 0 12 18" fill="none" stroke="#fff"><rect x="1.500" y="4" width="7" height="10" rx="2" /><path d="M3 1.500h5M3 16.500h5M9 8l2-1v4l-2-1" /></svg></TrayIcon>
                    <TrayIcon $w={22}><svg width="16" height="14" viewBox="0 0 16 14" fill="none" stroke="#fff"><rect x=".5" y=".5" width="4" height="6" /><path d="M4.500 1.500h11v8h-13V7M8 9.500v3M5 13h7" /></svg></TrayIcon>
                    <TrayIcon $w={22}><svg width="18" height="16" viewBox="0 0 18 16"><path d="M1 5.500h2.500L7 2v11L3.500 9.500H1z" fill="none" stroke="#fff" /><rect x="9" y="7" width="8" height="8" rx="2.500" fill="#e81123" /><path d="M11 9l4 4M15 9l-4 4" stroke="#fff" strokeWidth="1.200" /></svg></TrayIcon>
                    <TrayText $w={40}>ENG<br />IN</TrayText>
                    <TrayText $w={62}>1:50 PM<br />4/7/2022</TrayText>
                    <Notif>
                      <svg width="17" height="16" viewBox="0 0 17 16"><path d="M0 0h17v12H7l-3 3v-3H0z" fill="#fff" /><path d="M3 3h11M3 6h11M3 9h11" stroke="#000" /></svg>
                      <NotifBadge>1</NotifBadge>
                    </Notif>
                    <ShowDesktop />
                  </TrayArea>
                </Taskbar>
              </RemContent>
            </WinBody>
          </Window>
        </Main>
      </Screen>
    </>
  );
}
